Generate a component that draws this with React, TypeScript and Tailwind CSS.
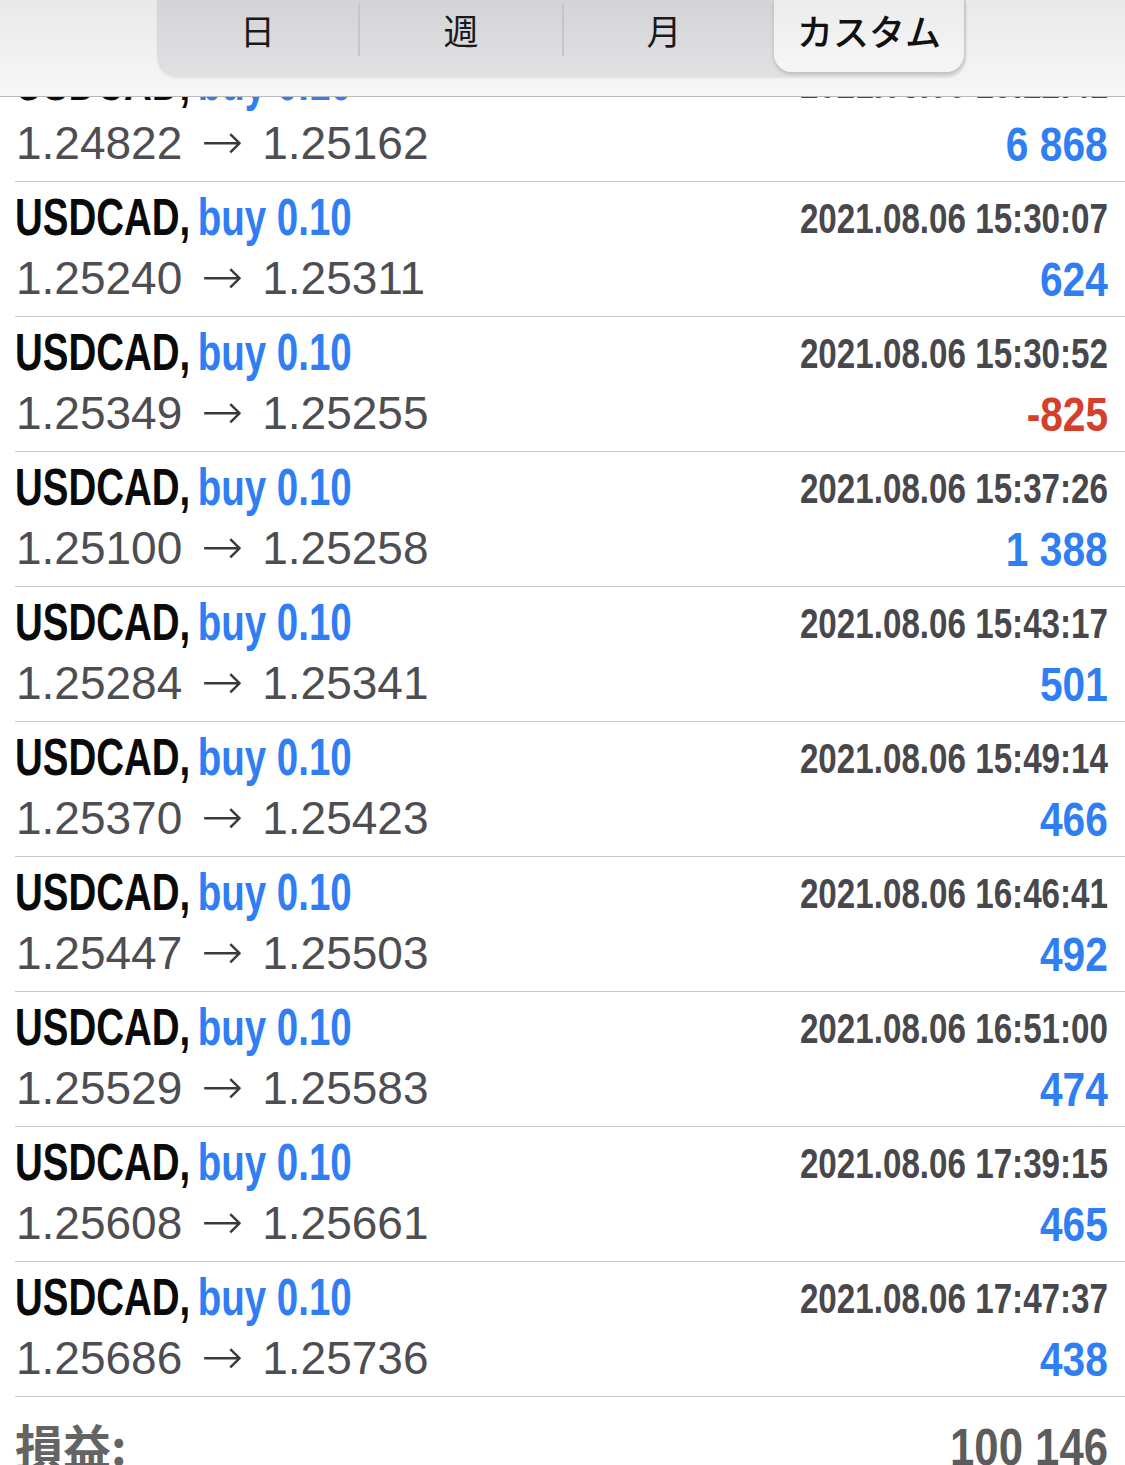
import React from "react";

type Deal = { time: string; from: string; to: string; profit: string; loss?: boolean };

const deals: Deal[] = [
  { time: "2021.08.06 15:22:41", from: "1.24822", to: "1.25162", profit: "6 868" },
  { time: "2021.08.06 15:30:07", from: "1.25240", to: "1.25311", profit: "624" },
  { time: "2021.08.06 15:30:52", from: "1.25349", to: "1.25255", profit: "-825", loss: true },
  { time: "2021.08.06 15:37:26", from: "1.25100", to: "1.25258", profit: "1 388" },
  { time: "2021.08.06 15:43:17", from: "1.25284", to: "1.25341", profit: "501" },
  { time: "2021.08.06 15:49:14", from: "1.25370", to: "1.25423", profit: "466" },
  { time: "2021.08.06 16:46:41", from: "1.25447", to: "1.25503", profit: "492" },
  { time: "2021.08.06 16:51:00", from: "1.25529", to: "1.25583", profit: "474" },
  { time: "2021.08.06 17:39:15", from: "1.25608", to: "1.25661", profit: "465" },
  { time: "2021.08.06 17:47:37", from: "1.25686", to: "1.25736", profit: "438" },
];

const sans = "font-['Liberation_Sans','Noto_Sans_CJK_JP',sans-serif]";
const cjk = "font-['Noto_Sans_CJK_JP','Liberation_Sans',sans-serif]";

function Row({ d }: { d: Deal }) {
  return (
    <div className="ml-[15px] border-b border-[#c8c8cc] pr-[17px] pt-[9px] pb-[13px]">
      <div className="flex h-[52px] items-baseline justify-between">
        <span className="inline-block origin-left scale-x-[0.74] whitespace-nowrap text-[52px] font-bold leading-[52px] text-[#0a0a0a]">
          USDCAD,<span className="ml-[10px] text-[#307ef3]">buy 0.10</span>
        </span>
        <span className="relative -top-[2px] inline-block origin-right scale-x-[0.79] whitespace-nowrap text-[42px] font-bold leading-[52px] text-[#48484c]">
          {d.time}
        </span>
      </div>
      <div className="mt-[11px] flex h-[49px] items-start justify-between">
        <span className="flex items-baseline whitespace-nowrap pl-[1px] text-[46px] leading-[46px] text-[#4d4d52]">
          <span>{d.from}</span>
          <span className="mx-[19px] font-['DejaVu_Sans',sans-serif] text-[50px] font-light leading-[46px] text-[#3a3a3e]">→</span>
          <span>{d.to}</span>
        </span>
        <span
          className={
            "mt-[1px] inline-block origin-right scale-x-[0.83] whitespace-nowrap text-[49px] font-bold leading-[49px] " +
            (d.loss ? "text-[#d5402b]" : "text-[#307ef3]")
          }
        >
          {d.profit}
        </span>
      </div>
    </div>
  );
}

export default function App() {
  return (
    <div className={"relative h-[1465px] w-full overflow-hidden bg-white " + sans}>
      <div className="pt-[47px]">
        {deals.map((d, i) => (
          <Row key={i} d={d} />
        ))}
        <div className="ml-[15px] flex items-baseline justify-between pr-[17px] pt-[21px]">
          <span className={"text-[48px] font-bold leading-[52px] text-[#646464] " + cjk}>損益:</span>
          <span className="inline-block origin-right scale-x-[0.84] whitespace-nowrap text-[52px] font-bold leading-[52px] text-[#5c5c5c]">
            100 146
          </span>
        </div>
      </div>

      <div className="absolute inset-x-0 top-0 h-[97px] border-b border-[#b9b9bb] bg-gradient-to-b from-[#e9e9eb] to-[#f7f7f8] pl-[157px]">
        <div
          className={
            "flex h-[77px] w-[809px] rounded-b-[20px] bg-gradient-to-b from-[#d4d4d6] to-[#e1e1e3] shadow-[0_1px_2px_rgba(0,0,0,0.08)] " +
            cjk
          }
        >
          <div className="flex h-[72px] w-[201px] justify-center pt-[8px] text-[35px] leading-[44px] text-[#1a1a1a]">日</div>
          <div className="mt-[3px] h-[53px] w-[2px] bg-[#c6c6c8]" />
          <div className="flex h-[72px] w-[202px] justify-center pt-[8px] text-[35px] leading-[44px] text-[#1a1a1a]">週</div>
          <div className="mt-[3px] h-[53px] w-[2px] bg-[#c6c6c8]" />
          <div className="flex h-[72px] w-[200px] justify-center pt-[8px] text-[35px] leading-[44px] text-[#1a1a1a]">月</div>
          <div className="ml-[10px] flex h-[72px] w-[190px] justify-center rounded-b-[18px] bg-gradient-to-b from-[#ececee] to-[#f6f6f6] pt-[8px] text-[36px] font-medium leading-[44px] text-[#111] shadow-[0_2px_4px_rgba(0,0,0,0.18)]">
            カスタム
          </div>
        </div>
      </div>
    </div>
  );
}
